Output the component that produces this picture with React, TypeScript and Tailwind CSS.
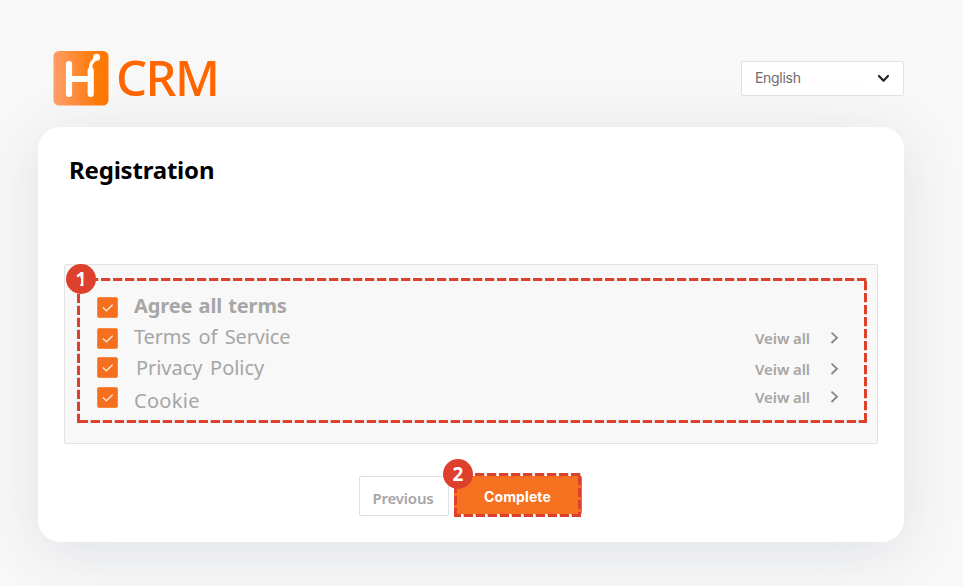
import React from "react";

function Check() {
  return (
    <span className="flex h-[21px] w-[21px] items-center justify-center rounded-[2px] border border-[#f58a45] bg-[#f56f1f]">
      <svg width="19" height="19" viewBox="0 0 19 19" fill="none" stroke="#ffe9da" strokeWidth="1.3">
        <path d="M4.8 9.6 8.4 12.8 14.6 6.8" />
      </svg>
    </span>
  );
}

function ViewAll({ className = "" }: { className?: string }) {
  return (
    <a className={`flex h-[31px] items-center justify-between text-[15px] font-semibold leading-[31px] text-[#a6a6a6] ${className}`}>
      <span className="whitespace-nowrap pt-[1px] tracking-[-0.1px]">Veiw all</span>
      <svg width="9" height="13" viewBox="0 0 9 13" fill="none" stroke="#858585" strokeWidth="1.8">
        <path d="M1.5 1.7 7 6.7 1.5 12" />
      </svg>
    </a>
  );
}

function Badge({ n, className }: { n: string; className: string }) {
  return (
    <span className={`absolute flex h-[30px] w-[30px] items-center justify-center rounded-full bg-[#de402e] text-[19px] font-bold leading-none text-white ${className}`}>
      {n}
    </span>
  );
}

export default function App() {
  return (
    <div className="h-[586px] w-[963px] overflow-hidden bg-[#f8f8f8] px-[38px] pt-[51px] font-['Noto_Sans','Open_Sans',sans-serif]">
      <header className="flex h-[76px] w-[866px] items-start justify-between pl-[15px]">
        <div className="flex">
          <svg width="56" height="55" viewBox="0 0 56 55">
            <defs>
              <linearGradient id="mark" x1="0" x2="1" y1="0.5" y2="0.4">
                <stop offset="0" stopColor="#ff9f6b" />
                <stop offset="0.75" stopColor="#ff7a08" />
                <stop offset="1" stopColor="#ff7800" />
              </linearGradient>
            </defs>
            <rect x="0.5" width="55" height="54.5" rx="5.5" fill="url(#mark)" />
            <g fill="none" stroke="#fff" strokeWidth="6.2" strokeLinecap="round">
              <path d="M16 13.2V43M37.7 43V19.5M16 28H37.7" />
              <path d="M37.7 18V15.5Q37.7 12.5 40 10.2L42.5 7.5" strokeWidth="3.4" />
            </g>
            <circle cx="43.6" cy="6.3" r="3.5" fill="#fff" />
          </svg>
          <span className="ml-[7px] mt-[-2px] h-[56px] whitespace-nowrap text-[49px] font-medium leading-[56px] tracking-[-1.5px] text-[#ff6600]">CRM</span>
        </div>
        <button className="mt-[10px] flex h-[35px] w-[163px] items-center justify-between rounded-[2px] border border-[#dee2e6] bg-white pl-[13px] pr-[13px] font-['Inter','Open_Sans',sans-serif] text-[14px] leading-5 tracking-[-0.3px] text-[#6c6c6c]">
          <span className="pb-[2px]">English</span>
          <svg width="13" height="9" viewBox="0 0 13 9" fill="none" stroke="#1f2428" strokeWidth="2.2" strokeLinecap="round" strokeLinejoin="round">
            <path d="M2 2 6.5 6.7 11 2" />
          </svg>
        </button>
      </header>

      <main className="relative h-[415px] w-[866px] rounded-[22px] bg-white px-[26px] pt-[27px] shadow-[0_10px_60px_rgba(45,55,85,0.12)]">
        <h1 className="h-8 pl-[5px] text-[24px] font-bold leading-8 tracking-[-0.2px] text-black">Registration</h1>

        <section className="mt-[78px] flex h-[180px] w-[814px] rounded-[2px] border border-[#e3e3e3] bg-[#f8f8f8] pl-[32px]">
          <div className="flex flex-col pt-[32px]">
            <Check />
            <div className="mt-[10px]"><Check /></div>
            <div className="mt-[8px]"><Check /></div>
            <div className="mt-[9px]"><Check /></div>
          </div>
          <div className="ml-[16px] flex flex-1 flex-col whitespace-nowrap pt-[25px] text-[20px] leading-[31px] text-[#a6a6a6]">
            <span className="font-bold tracking-[-0.1px] [word-spacing:1px]">Agree all terms</span>
            <span className="tracking-[-0.15px] [word-spacing:2.6px]">Terms of Service</span>
            <span className="pl-[2px] tracking-[-0.05px] [word-spacing:2.6px]">Privacy Policy</span>
            <span className="mt-[2px] tracking-[0.3px]">Cookie</span>
          </div>
          <div className="mr-[38px] flex w-[84px] flex-col pt-[57px]">
            <ViewAll />
            <ViewAll />
            <ViewAll className="-mt-[3px]" />
          </div>
        </section>

        <div className="mt-[32px] flex justify-center pr-[2px]">
          <button className="mr-[5px] flex h-[40px] w-[90px] items-center justify-center rounded-[2px] border border-[#dee2e6] bg-white pt-[5px] pr-[1px] text-[15px] font-semibold tracking-[-0.2px] text-[#a6a6a6]">Previous</button>
          <button className="flex h-[38px] w-[128px] items-center justify-center rounded-[2px] bg-[#f57120] pt-[2px] font-['Inter','Open_Sans',sans-serif] text-[14px] font-bold tracking-[0.1px] text-white">Complete</button>
        </div>

        <svg className="absolute left-[39px] top-[151px]" width="790" height="145" viewBox="0 0 790 145" fill="none" stroke="#de402e" strokeWidth="3" strokeDasharray="9.3 2.7">
          <path d="M0 1.5H790" />
          <path d="M788.5 3V145" />
          <path d="M790 143.5H0" strokeDashoffset="1" />
          <path d="M1.5 145V0" />
        </svg>
        <Badge n="1" className="left-[28px] top-[137px]" />
        <span className="absolute left-[41px] top-[151px] h-[6px] w-[2px] bg-[#de402e]" />
        <svg className="absolute left-[416px] top-[346px]" width="128" height="44" viewBox="0 0 128 44" fill="none" stroke="#de402e" strokeWidth="3" strokeDasharray="9.3 2.7">
          <path d="M0 1.5H127" strokeDashoffset="3" />
          <path d="M125.5 3V44" />
          <path d="M127 42.5H0" />
          <path d="M1.5 44V0" />
        </svg>
        <Badge n="2" className="left-[405px] top-[332px]" />
      </main>
    </div>
  );
}
